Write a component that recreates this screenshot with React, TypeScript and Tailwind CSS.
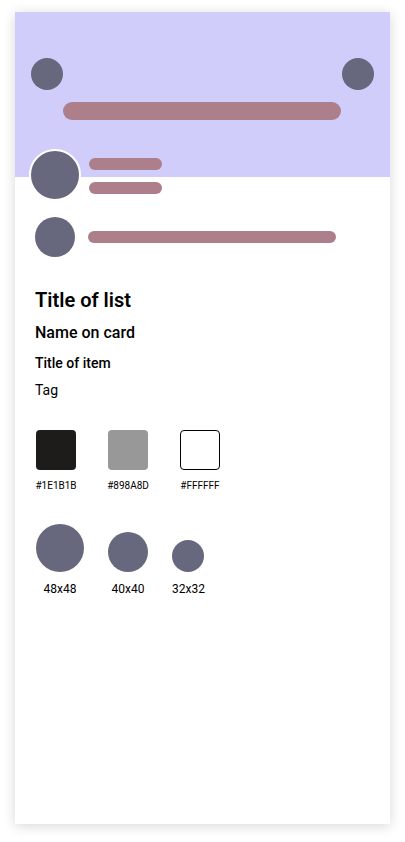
import React from 'react';

const swatches = [
  { hex: '#1E1B1B', className: 'bg-[#1e1b1b]' },
  { hex: '#898A8D', className: 'bg-[#989898]' },
  { hex: '#FFFFFF', className: 'bg-white border border-black' },
];

const sizes = [
  { label: '48x48', className: 'w-12 h-12' },
  { label: '40x40', className: 'w-10 h-10' },
  { label: '32x32', className: 'w-8 h-8' },
];

function App() {
  return (
    <div className="min-h-screen bg-white pt-3 pl-[15px] font-['Roboto',sans-serif] text-black">
      <div className="w-[375px] h-[812px] bg-white shadow-[0_2px_12px_rgba(0,0,0,0.16)] overflow-hidden">
        {/* header */}
        <div className="h-[165px] bg-[#d0cdfa] pt-[46px] px-4">
          <div className="flex justify-between">
            <div className="w-8 h-8 rounded-full bg-[#67687d]" />
            <div className="w-8 h-8 rounded-full bg-[#67687d]" />
          </div>
          <div className="mt-3 ml-8 w-[278px] h-[18px] rounded-full bg-[#ad7f8a]" />
        </div>

        {/* avatar row overlapping the header */}
        <div className="relative -mt-[28px] flex items-center pl-[14px] gap-2">
          <div className="w-[52px] h-[52px] rounded-full bg-[#67687d] border-2 border-white" />
          <div className="flex flex-col gap-3 mt-[2px]">
            <div className="w-[73px] h-3 rounded-full bg-[#ad7f8a]" />
            <div className="w-[73px] h-3 rounded-full bg-[#ad7f8a]" />
          </div>
        </div>

        <div className="mt-4 flex items-center pl-5 gap-[13px]">
          <div className="w-10 h-10 rounded-full bg-[#67687d]" />
          <div className="w-[248px] h-3 rounded-full bg-[#ad7f8a]" />
        </div>

        <div className="px-5 mt-[29px]">
          <h1 className="text-[20px] leading-[28px] font-semibold">Title of list</h1>
          <h2 className="mt-[7px] text-[16px] leading-[24px] font-medium">Name on card</h2>
          <h3 className="mt-2 text-[14px] leading-[20px] font-medium">Title of item</h3>
          <p className="mt-[7px] text-[14px] leading-[20px]">Tag</p>

          <div className="mt-[30px] ml-px flex gap-8">
            {swatches.map((s) => (
              <div key={s.hex} className="flex flex-col items-center w-10">
                <div className={`w-10 h-10 rounded ${s.className}`} />
                <span className="mt-[9px] text-[10px] leading-[14px] whitespace-nowrap">{s.hex}</span>
              </div>
            ))}
          </div>

          <div className="mt-[31px] ml-px flex items-end gap-6">
            {sizes.map((s) => (
              <div key={s.label} className="flex flex-col items-center">
                <div className={`rounded-full bg-[#67687d] ${s.className}`} />
                <span className="mt-[9px] text-[12px] leading-[16px]">{s.label}</span>
              </div>
            ))}
          </div>
        </div>
      </div>
    </div>
  );
}

export default App;
